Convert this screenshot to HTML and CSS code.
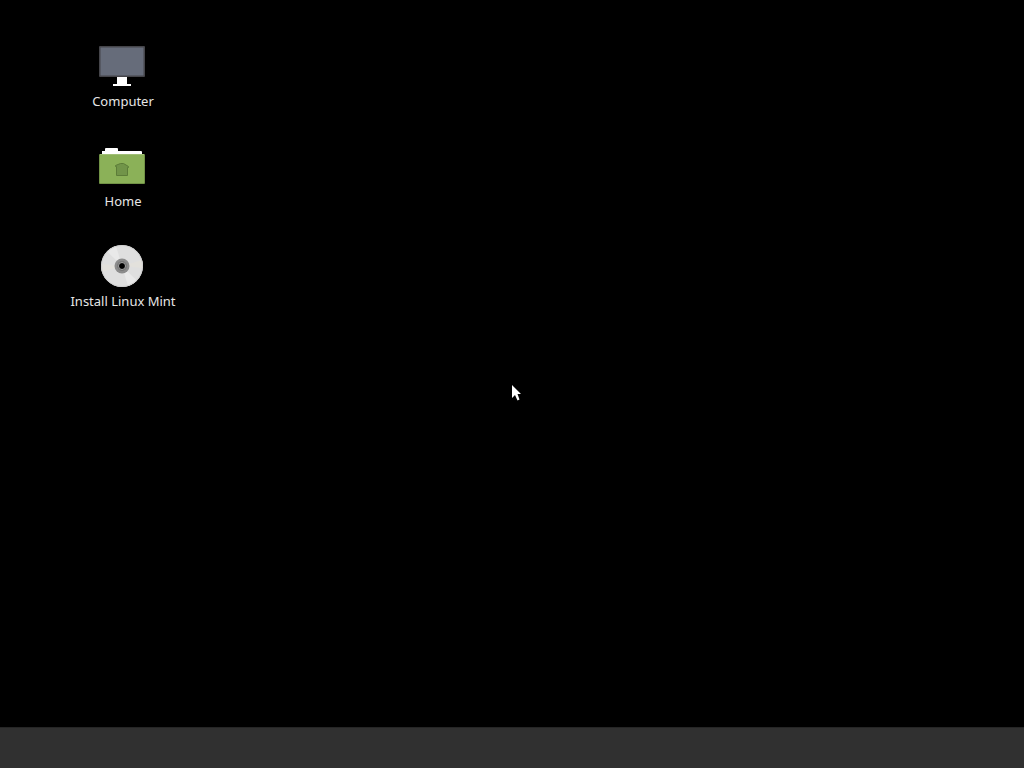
FILE: index.html
```html
<!DOCTYPE html>
<html lang="en">
<head>
<meta charset="utf-8">
<title>Desktop</title>
<link rel="stylesheet" href="styles.css">
</head>
<body>
<main class="desktop">
  <nav class="icons" aria-label="Desktop icons">
    <button class="launcher" type="button">
      <svg class="icon" viewBox="0 0 48 48" aria-hidden="true">
        <rect x="1" y="4" width="46" height="31" rx="1" fill="#45454a"/>
        <rect x="2.500" y="5.500" width="43" height="28" fill="#666c7a"/>
        <path d="M19 35h10v7h4v2H15v-2h4z" fill="#fff"/>
      </svg>
      <span class="label">Computer</span>
    </button>
    <button class="launcher" type="button">
      <svg class="icon" viewBox="0 0 48 48" aria-hidden="true">
        <path d="M4 13V9h3V7q0-1 1-1h11q1 0 1 1v2h23q1 0 1 1v3z" fill="#fff"/>
        <rect x="1" y="12" width="46" height="30" rx="1" fill="#719246"/>
        <path d="M2 12h44v29H2z" fill="#8bb158"/>
        <path d="M2 12h44v1H2z" fill="#a0bf75"/>
        <path d="M18.500 33.500v-9h-1v-1l5-2h3l5 3v1h-1v8z" fill="#719449" stroke="#5c7c38" stroke-width="1"/>
      </svg>
      <span class="label">Home</span>
    </button>
    <button class="launcher" type="button">
      <svg class="icon" viewBox="0 0 48 48" aria-hidden="true">
        <circle cx="24" cy="24" r="21" fill="#dfdfdf"/>
        <path d="M24 24 9 9.300A21 21 0 0 1 18 4zM24 24l15 14.700A21 21 0 0 1 30 44z" fill="#e9e9e9"/>
        <path d="M24 24 44 18a21 21 0 0 1 1 8zM24 24 4 30a21 21 0 0 1-1-8z" fill="#e3e1dc"/>
        <circle cx="24" cy="24" r="20.500" fill="none" stroke="#d0d0d0"/>
        <circle cx="24" cy="24" r="7.500" fill="#8c8c8c"/>
        <circle cx="24" cy="24" r="5" fill="#777"/>
        <circle cx="24" cy="24" r="3.500" fill="#000" stroke="#aaa" stroke-width="1"/>
      </svg>
      <span class="label">Install Linux Mint</span>
    </button>
  </nav>
  <svg class="pointer" viewBox="0 0 12 18" aria-hidden="true">
    <path d="M1 1v13l3-3 2.500 5.500 2-1L6.500 10H10z" fill="#fff"/>
  </svg>
</main>
<footer class="panel"></footer>
</body>
</html>
```
FILE: styles.css
```css
* {
  box-sizing: border-box;
}

body {
  margin: 0;
  min-height: 100vh;
  display: flex;
  flex-direction: column;
  background: #000;
  font-family: "Noto Sans", "Open Sans", sans-serif;
  font-size: 13px;
  line-height: 18px;
  color: #e6e6e6;
}

.desktop {
  flex: 1;
  padding: 42px 62px;
}

.icons {
  display: flex;
  flex-direction: column;
  align-items: flex-start;
  gap: 32px;
}

.launcher {
  width: 120px;
  padding: 0;
  border: 0;
  background: none;
  color: inherit;
  font: inherit;
  display: flex;
  flex-direction: column;
  align-items: center;
  gap: 2px;
}

.icon {
  width: 48px;
  height: 48px;
}

.label {
  padding-left: 2px;
  white-space: nowrap;
}

.pointer {
  position: absolute;
  left: 50%;
  top: 50%;
  width: 12px;
  height: 18px;
  margin-left: -1px;
}

.panel {
  height: 41px;
  background: #303030;
  border-top: 1px solid #252525;
}
```
